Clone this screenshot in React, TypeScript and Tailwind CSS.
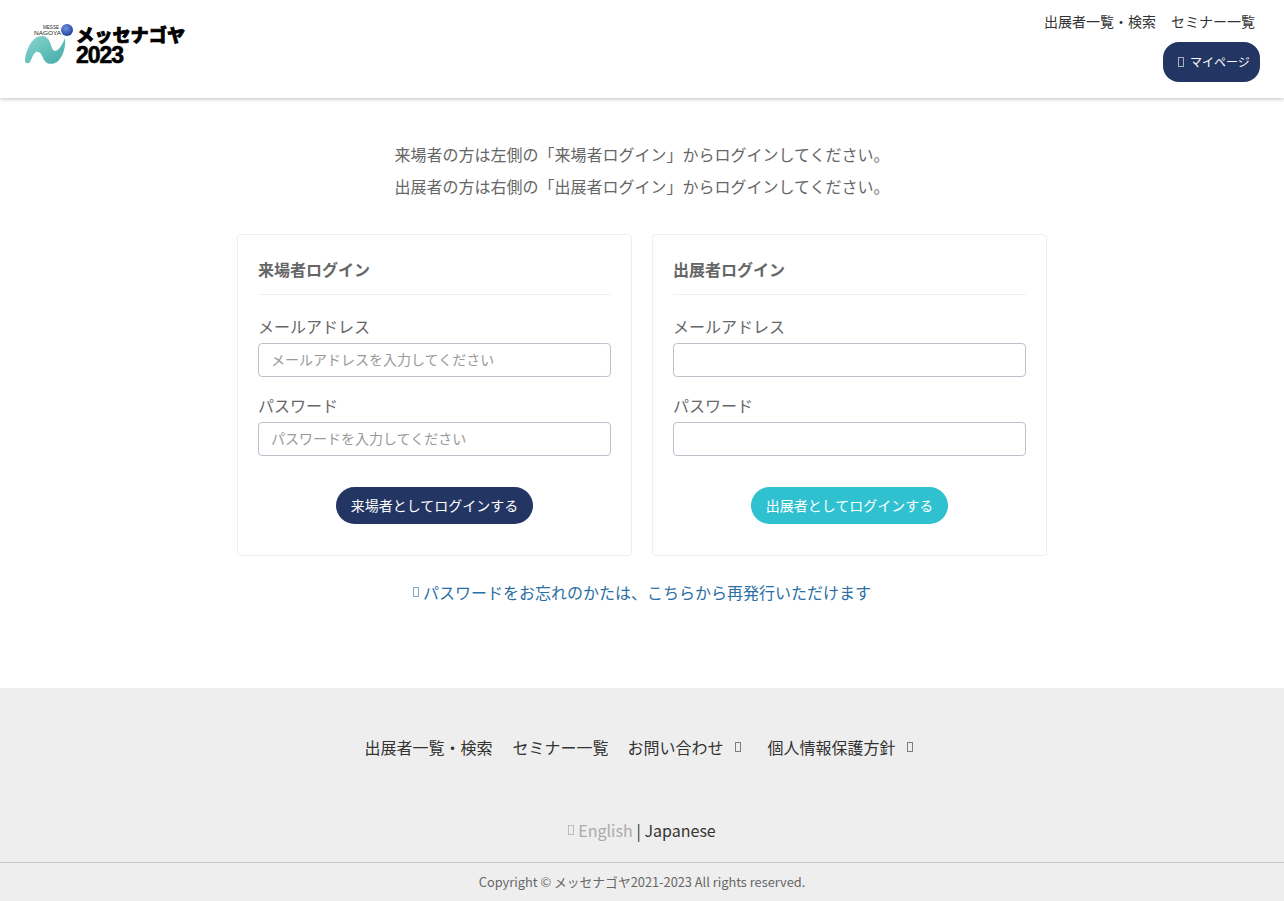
import React from "react";

const font = { fontFamily: '"Noto Sans CJK JP", "Noto Sans", sans-serif' };

function Logo() {
  return (
    <div className="flex items-start mt-[24px] ml-[25px] h-[42px]">
      <svg width="50" height="40" viewBox="0 0 50 40" className="shrink-0">
        <defs>
          <radialGradient id="ball" cx="40%" cy="35%" r="70%">
            <stop offset="0%" stopColor="#6f8fe0" />
            <stop offset="100%" stopColor="#1f3f9a" />
          </radialGradient>
          <linearGradient id="wave" x1="0" y1="0" x2="1" y2="1">
            <stop offset="0%" stopColor="#8ad6d0" />
            <stop offset="100%" stopColor="#42aaa8" />
          </linearGradient>
        </defs>
        <path
          d="M0 36 C1 26 7 12 17 12 C24 12 25 19 27 24 C29 29 33 27 36 22 C38 19 39 16 40 14 C41 23 38 33 32 38 C25 42 20 39 18 34 C16 29 14 27 11 28 C8 30 7 34 5 38 C3 40 0 40 0 36 Z"
          fill="url(#wave)"
        />
        <circle cx="42" cy="6" r="6" fill="url(#ball)" />
        <text x="18" y="5" fontSize="6" fill="#222" fontFamily="Liberation Sans" textLength="16" lengthAdjust="spacingAndGlyphs">MESSE</text>
        <text x="9" y="11" fontSize="6" fill="#222" fontFamily="Liberation Sans" textLength="27" lengthAdjust="spacingAndGlyphs">NAGOYA</text>
      </svg>
      <div className="ml-[1px] flex flex-col text-black font-black">
        <span className="text-[18.2px] leading-[21px] whitespace-nowrap [-webkit-text-stroke:0.7px_black]">メッセナゴヤ</span>
        <span
          className="text-[23px] leading-[21px] tracking-[-1px] [-webkit-text-stroke:0.6px_black]"
          style={{ fontFamily: '"Liberation Sans", sans-serif', fontWeight: 700 }}
        >
          2023
        </span>
      </div>
    </div>
  );
}

function Tofu({ className = "" }: { className?: string }) {
  return <span className={`inline-block border border-current w-[6px] h-[10px] opacity-60 ${className}`} />;
}

function Card({
  title,
  emailPh,
  passPh,
  btn,
  btnClass,
}: {
  title: string;
  emailPh: string;
  passPh: string;
  btn: string;
  btnClass: string;
}) {
  return (
    <div className="w-[395px] h-[322px] border border-[#eceef1] rounded-[4px] bg-white px-[20px]">
      <div className="h-[60px] border-b border-[#eef0f2] pt-[21px] text-[16px] leading-[26px] font-bold text-[#666]">{title}</div>
      <div className="mt-[18px] text-[16px] leading-[26px] text-[#666]">メールアドレス</div>
      <input
        placeholder={emailPh}
        className="mt-[4px] block w-full h-[34px] rounded-[4px] border border-[#bfc0cc] px-[12px] pb-[2px] text-[14px] text-[#555] placeholder:text-[#999] outline-none bg-white"
      />
      <div className="mt-[15px] text-[16px] leading-[26px] text-[#666]">パスワード</div>
      <input
        placeholder={passPh}
        className="mt-[4px] block w-full h-[34px] rounded-[4px] border border-[#bfc0cc] px-[12px] pb-[2px] text-[14px] text-[#555] placeholder:text-[#999] outline-none bg-white"
      />
      <div className="mt-[31px] flex justify-center">
        <button className={`h-[37px] w-[197px] rounded-full text-white text-[14px] ${btnClass}`}>{btn}</button>
      </div>
    </div>
  );
}

export default function App() {
  return (
    <div className="min-h-[901px] bg-white flex flex-col text-[#333]" style={font}>
      <header className="h-[98px] shrink-0 flex justify-between shadow-[0_1px_4px_rgba(0,0,0,0.25)] relative">
        <Logo />
        <div className="flex flex-col items-end pr-[24px]">
          <nav className="flex gap-[15px] mt-[11px] mr-[5px] text-[14px] leading-[21px] text-[#333]">
            <span>出展者一覧・検索</span>
            <span>セミナー一覧</span>
          </nav>
          <button className="mt-[10px] h-[40px] w-[97px] rounded-[16px] bg-[#233563] text-white text-[12px] flex items-center pl-[15px] gap-[6px]">
            <Tofu />
            <span>マイページ</span>
          </button>
        </div>
      </header>

      <main className="flex-1 flex flex-col items-center">
        <div className="mt-[40px] text-center text-[16px] leading-[32px] text-[#666]">
          <p>来場者の方は左側の「来場者ログイン」からログインしてください。</p>
          <p>出展者の方は右側の「出展者ログイン」からログインしてください。</p>
        </div>
        <div className="mt-[32px] flex gap-[20px]">
          <Card
            title="来場者ログイン"
            emailPh="メールアドレスを入力してください"
            passPh="パスワードを入力してください"
            btn="来場者としてログインする"
            btnClass="bg-[#233563]"
          />
          <Card title="出展者ログイン" emailPh="" passPh="" btn="出展者としてログインする" btnClass="bg-[#2fc1d0]" />
        </div>
        <a className="mt-[23px] flex items-center gap-[4px] text-[16px] leading-[26px] text-[#2a6ea5]">
          <Tofu />
          <span>パスワードをお忘れのかたは、こちらから再発行いただけます</span>
        </a>
      </main>

      <footer className="h-[213px] shrink-0 bg-[#eeeeee] flex flex-col">
        <nav className="mt-[46px] h-[26px] flex justify-center items-center text-[16px] text-[#333] pr-[7px]">
          <span>出展者一覧・検索</span>
          <span className="ml-[20px]">セミナー一覧</span>
          <span className="ml-[19px]">お問い合わせ</span>
          <Tofu className="ml-[11px]" />
          <span className="ml-[27px]">個人情報保護方針</span>
          <Tofu className="ml-[11px]" />
        </nav>
        <div className="mt-[57px] h-[26px] flex justify-center items-center text-[16px]">
          <Tofu className="text-[#999] mr-[4px]" />
          <span className="text-[#aaa]">English</span>
          <span className="text-[#333] ml-[4px]">| Japanese</span>
        </div>
        <div className="mt-[19px] flex-1 border-t border-[#c8c8c8] flex items-center justify-center text-[12.8px] text-[#666] pb-[1px]">
          Copyright © メッセナゴヤ2021-2023 All rights reserved.
        </div>
      </footer>
    </div>
  );
}
